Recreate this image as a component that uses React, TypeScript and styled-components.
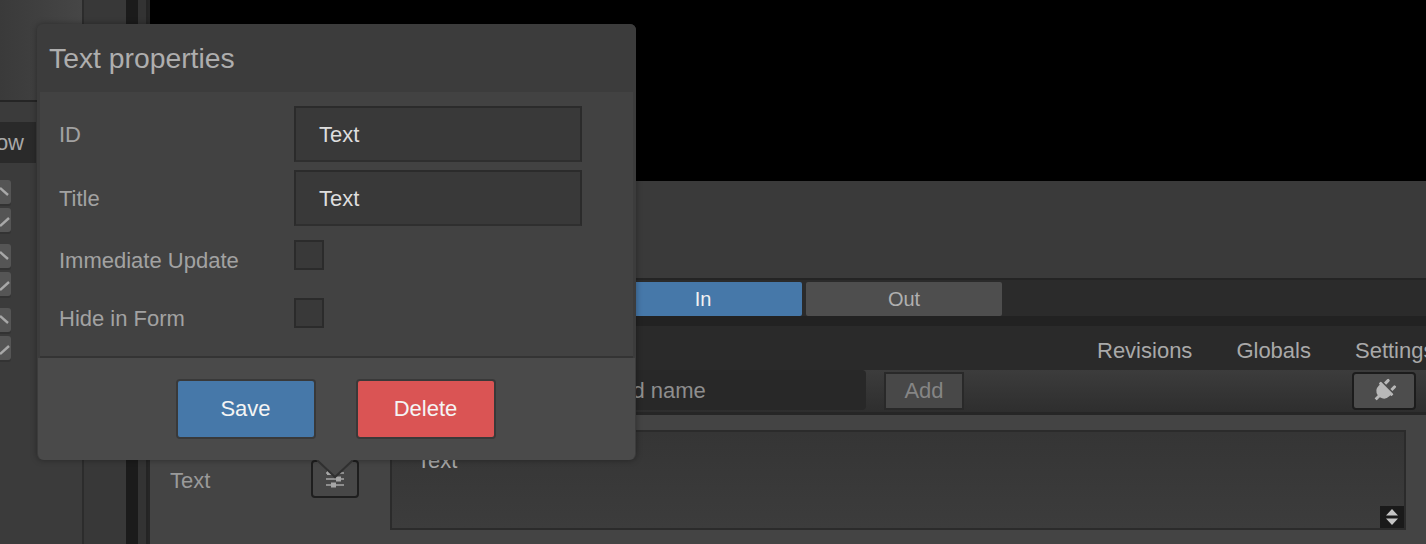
import styled, { createGlobalStyle } from "styled-components";
import { FaPlug } from "react-icons/fa";

const GlobalStyle = createGlobalStyle`
  html, body {
    margin: 0;
    padding: 0;
    background: #000;
  }
  * {
    box-sizing: border-box;
  }
  body {
    font-family: "Liberation Sans", Arial, sans-serif;
    font-size: 22px;
  }
`;

const Page = styled.div`
  position: relative;
  display: flex;
  width: 1426px;
  height: 544px;
  overflow: hidden;
`;

const LeftPanel = styled.div`
  display: flex;
  flex-direction: column;
  width: 84px;
  flex-shrink: 0;
  background: #3b3b3b;
  border-right: 2px solid #2c2c2c;
`;

const LeftHead = styled.div`
  height: 102px;
  flex-shrink: 0;
  background: linear-gradient(90deg, #3a3a3a, #464646);
  border-bottom: 2px solid #252525;
`;

const ViewTab = styled.div`
  display: flex;
  align-items: center;
  justify-content: flex-end;
  width: 36px;
  height: 41px;
  margin-top: 20px;
  padding-right: 12px;
  background: #2a2a2a;
  color: #a8a8a8;
`;

const ArrowGroups = styled.div`
  display: flex;
  flex-direction: column;
  gap: 12px;
  margin-top: 17px;
`;

const ArrowPair = styled.div`
  display: flex;
  flex-direction: column;
  gap: 4px;
`;

const ArrowBtn = styled.div`
  display: flex;
  width: 11px;
  height: 24px;
  background: #555;
  border-radius: 0 3px 3px 0;
  box-shadow: 0 2px 0 #333;
`;

const Gutter = styled.div`
  width: 42px;
  flex-shrink: 0;
  background: #383838;
`;

const Splitter = styled.div`
  width: 12px;
  flex-shrink: 0;
  background: #1b1b1b;
`;

const Rail = styled.div`
  width: 10px;
  flex-shrink: 0;
  background: #333;
  border-right: 2px solid #242424;
`;

const Main = styled.div`
  display: flex;
  flex-direction: column;
  flex: 1;
  min-width: 0;
  background: #3c3c3c;
  border-left: 2px solid #262626;
`;

const Preview = styled.div`
  height: 181px;
  flex-shrink: 0;
  background: #000;
`;

const Header = styled.div`
  height: 97px;
  flex-shrink: 0;
  background: #3a3a3a;
`;

const ModeBar = styled.div`
  display: flex;
  gap: 4px;
  height: 48px;
  flex-shrink: 0;
  padding: 2px 0 0 454px;
  background: linear-gradient(180deg, #2b2b2b 0, #2b2b2b 36px, #222 36px);
  border-top: 2px solid #242424;
`;

const ModeBtn = styled.div<{ $active?: boolean }>`
  display: flex;
  align-items: center;
  justify-content: center;
  width: ${(p) => (p.$active ? "198px" : "196px")};
  height: 34px;
  border-radius: 2px;
  font-size: 20px;
  background: ${(p) => (p.$active ? "#4678a9" : "#4e4e4e")};
  color: ${(p) => (p.$active ? "#f2f2f2" : "#b0b0b0")};
`;

const NavBar = styled.div`
  display: flex;
  align-items: center;
  gap: 44px;
  height: 44px;
  flex-shrink: 0;
  padding: 6px 0 0 947px;
  background: #2a2a2a;
  color: #a9a9a9;
  white-space: nowrap;
`;

const Toolbar = styled.div`
  display: flex;
  align-items: flex-start;
  height: 45px;
  flex-shrink: 0;
  padding-top: 2px;
  background: linear-gradient(180deg, #3c3c3c, #2e2e2e);
  border-bottom: 3px solid #262626;
`;

const FieldName = styled.div`
  display: flex;
  align-items: center;
  width: 716px;
  height: 40px;
  margin-top: -2px;
  padding: 2px 0 0 409px;
  border-radius: 0 4px 4px 0;
  background: #282828;
  color: #8e8e8e;
  white-space: nowrap;
`;

const AddBtn = styled.div`
  display: flex;
  align-items: center;
  justify-content: center;
  width: 80px;
  height: 38px;
  margin-left: 18px;
  background: #484848;
  border: 2px solid #292929;
  color: #858585;
`;

const PlugBtn = styled.div`
  display: flex;
  align-items: center;
  justify-content: center;
  width: 64px;
  height: 38px;
  margin-left: 388px;
  background: #4d4d4d;
  border: 2px solid #1c1c1c;
  border-radius: 4px;
  color: #b8b8b8;

  svg {
    transform: rotate(45deg);
  }
`;

const Content = styled.div`
  display: flex;
  flex: 1;
  padding: 15px 20px 0 20px;
  background: #444;
`;

const FieldLabel = styled.div`
  width: 141px;
  margin-top: 38px;
  color: #9a9a9a;
`;

const IconBtn = styled.div`
  display: flex;
  align-items: center;
  justify-content: center;
  width: 48px;
  height: 38px;
  margin-top: 30px;
  background: #474747;
  border: 2px solid #1e1e1e;
  border-radius: 4px;
`;

const TextArea = styled.div`
  position: relative;
  width: 1016px;
  height: 100px;
  margin-left: 31px;
  padding: 16px 25px;
  background: linear-gradient(180deg, #353535, #3c3c3c);
  border: 2px solid #2b2b2b;
  color: #a6a6a6;
`;

const ResizeHandle = styled.div`
  position: absolute;
  right: 0;
  bottom: 0;
  display: flex;
  align-items: center;
  justify-content: center;
  width: 24px;
  height: 22px;
  background: #1a1a1a;
`;

const Popover = styled.div`
  position: absolute;
  left: 37px;
  top: 24px;
  width: 599px;
  height: 436px;
  display: flex;
  flex-direction: column;
  background: #3c3c3c;
  border-radius: 6px;
  box-shadow: 0 0 6px rgba(0, 0, 0, 0.35);
`;

const PopTitle = styled.div`
  display: flex;
  align-items: center;
  height: 68px;
  flex-shrink: 0;
  padding: 1px 0 0 12px;
  background: #3c3c3c;
  border-radius: 6px 6px 0 0;
  color: #aeaeae;
  font-size: 28.3px;
`;

const PopBody = styled.div`
  height: 266px;
  flex-shrink: 0;
  display: flex;
  flex-direction: column;
  margin: 0 3px;
  padding: 14px 0 0 19px;
  background: #424242;
  border-bottom: 2px solid #343434;
`;

const InputRow = styled.div`
  display: flex;
  align-items: center;
  height: 56px;
  margin-bottom: 8px;
`;

const CheckRow = styled.div<{ $gap: number }>`
  display: flex;
  height: 30px;
  margin-top: ${(p) => p.$gap}px;
`;

const RowLabel = styled.div<{ $drop?: number }>`
  width: 235px;
  flex-shrink: 0;
  padding-top: ${(p) => p.$drop ?? 0}px;
  color: #a2a2a2;
`;

const TextInput = styled.div`
  display: flex;
  align-items: center;
  width: 288px;
  height: 56px;
  padding: 2px 0 0 23px;
  background: #393939;
  border: 2px solid #2b2b2b;
  border-bottom-color: #2f2f2f;
  color: #dedede;
`;

const CheckBox = styled.div`
  width: 30px;
  height: 30px;
  background: #393939;
  border: 2px solid #2b2b2b;
`;

const PopFooter = styled.div`
  display: flex;
  flex: 1;
  align-items: center;
  justify-content: center;
  gap: 40px;
  margin: 0 1px;
  padding-right: 2px;
  background: #4a4a4a;
  border-radius: 0 0 6px 6px;
`;

const ActionBtn = styled.div<{ $color: string }>`
  display: flex;
  align-items: center;
  justify-content: center;
  width: 140px;
  height: 60px;
  border: 2px solid #393939;
  border-radius: 4px;
  background: ${(p) => p.$color};
  color: #f4f4f4;
`;

const Notch = styled.svg`
  position: absolute;
  left: 278px;
  top: 436px;
`;

function ArrowMark({ up }: { up: boolean }) {
  return (
    <svg width="11" height="24" viewBox="0 0 11 24">
      <path
        d={up ? "M0 8 L8 15" : "M0 18 L9 10"}
        stroke="#a8a8a8"
        strokeWidth="2.4"
        fill="none"
      />
    </svg>
  );
}

function SlidersIcon() {
  return (
    <svg width="20" height="18" viewBox="0 0 20 18">
      <path d="M1 3 H19 M1 9 H19 M1 15 H19" stroke="#a6a6a6" strokeWidth="1.3" />
      <rect x="2" y="1" width="5" height="4" fill="#a6a6a6" />
      <rect x="11" y="6.5" width="5" height="5" fill="#a6a6a6" />
      <rect x="6" y="12.5" width="5" height="5" fill="#a6a6a6" />
    </svg>
  );
}

function SortIcon() {
  return (
    <svg width="12" height="16" viewBox="0 0 12 16">
      <path d="M6 0 L12 6.5 H0 Z M6 16 L12 9.5 H0 Z" fill="#c4c4c4" />
    </svg>
  );
}

export default function App() {
  return (
    <>
      <GlobalStyle />
      <Page>
        <LeftPanel>
          <LeftHead />
          <ViewTab>ow</ViewTab>
          <ArrowGroups>
            {[0, 1, 2].map((i) => (
              <ArrowPair key={i}>
                <ArrowBtn>
                  <ArrowMark up />
                </ArrowBtn>
                <ArrowBtn>
                  <ArrowMark up={false} />
                </ArrowBtn>
              </ArrowPair>
            ))}
          </ArrowGroups>
        </LeftPanel>
        <Gutter />
        <Splitter />
        <Rail />
        <Main>
          <Preview />
          <Header />
          <ModeBar>
            <ModeBtn $active>In</ModeBtn>
            <ModeBtn>Out</ModeBtn>
          </ModeBar>
          <NavBar>
            <span>Revisions</span>
            <span>Globals</span>
            <span>Settings</span>
          </NavBar>
          <Toolbar>
            <FieldName>Add field name</FieldName>
            <AddBtn>Add</AddBtn>
            <PlugBtn>
              <FaPlug size={24} />
            </PlugBtn>
          </Toolbar>
          <Content>
            <FieldLabel>Text</FieldLabel>
            <IconBtn>
              <SlidersIcon />
            </IconBtn>
            <TextArea>
              Text
              <ResizeHandle>
                <SortIcon />
              </ResizeHandle>
            </TextArea>
          </Content>
        </Main>
        <Popover>
          <PopTitle>Text properties</PopTitle>
          <PopBody>
            <InputRow>
              <RowLabel $drop={2}>ID</RowLabel>
              <TextInput>Text</TextInput>
            </InputRow>
            <InputRow>
              <RowLabel $drop={2}>Title</RowLabel>
              <TextInput>Text</TextInput>
            </InputRow>
            <CheckRow $gap={6}>
              <RowLabel $drop={8}>Immediate Update</RowLabel>
              <CheckBox />
            </CheckRow>
            <CheckRow $gap={28}>
              <RowLabel $drop={8}>Hide in Form</RowLabel>
              <CheckBox />
            </CheckRow>
          </PopBody>
          <PopFooter>
            <ActionBtn $color="#4678a9">Save</ActionBtn>
            <ActionBtn $color="#da5454">Delete</ActionBtn>
          </PopFooter>
          <Notch width="40" height="20" viewBox="0 0 40 20">
            <path d="M2 0 L20 17 L38 0 Z" fill="#484848" />
            <path d="M2 0 L20 17 L38 0" fill="none" stroke="#303030" strokeWidth="2" />
          </Notch>
        </Popover>
      </Page>
    </>
  );
}
